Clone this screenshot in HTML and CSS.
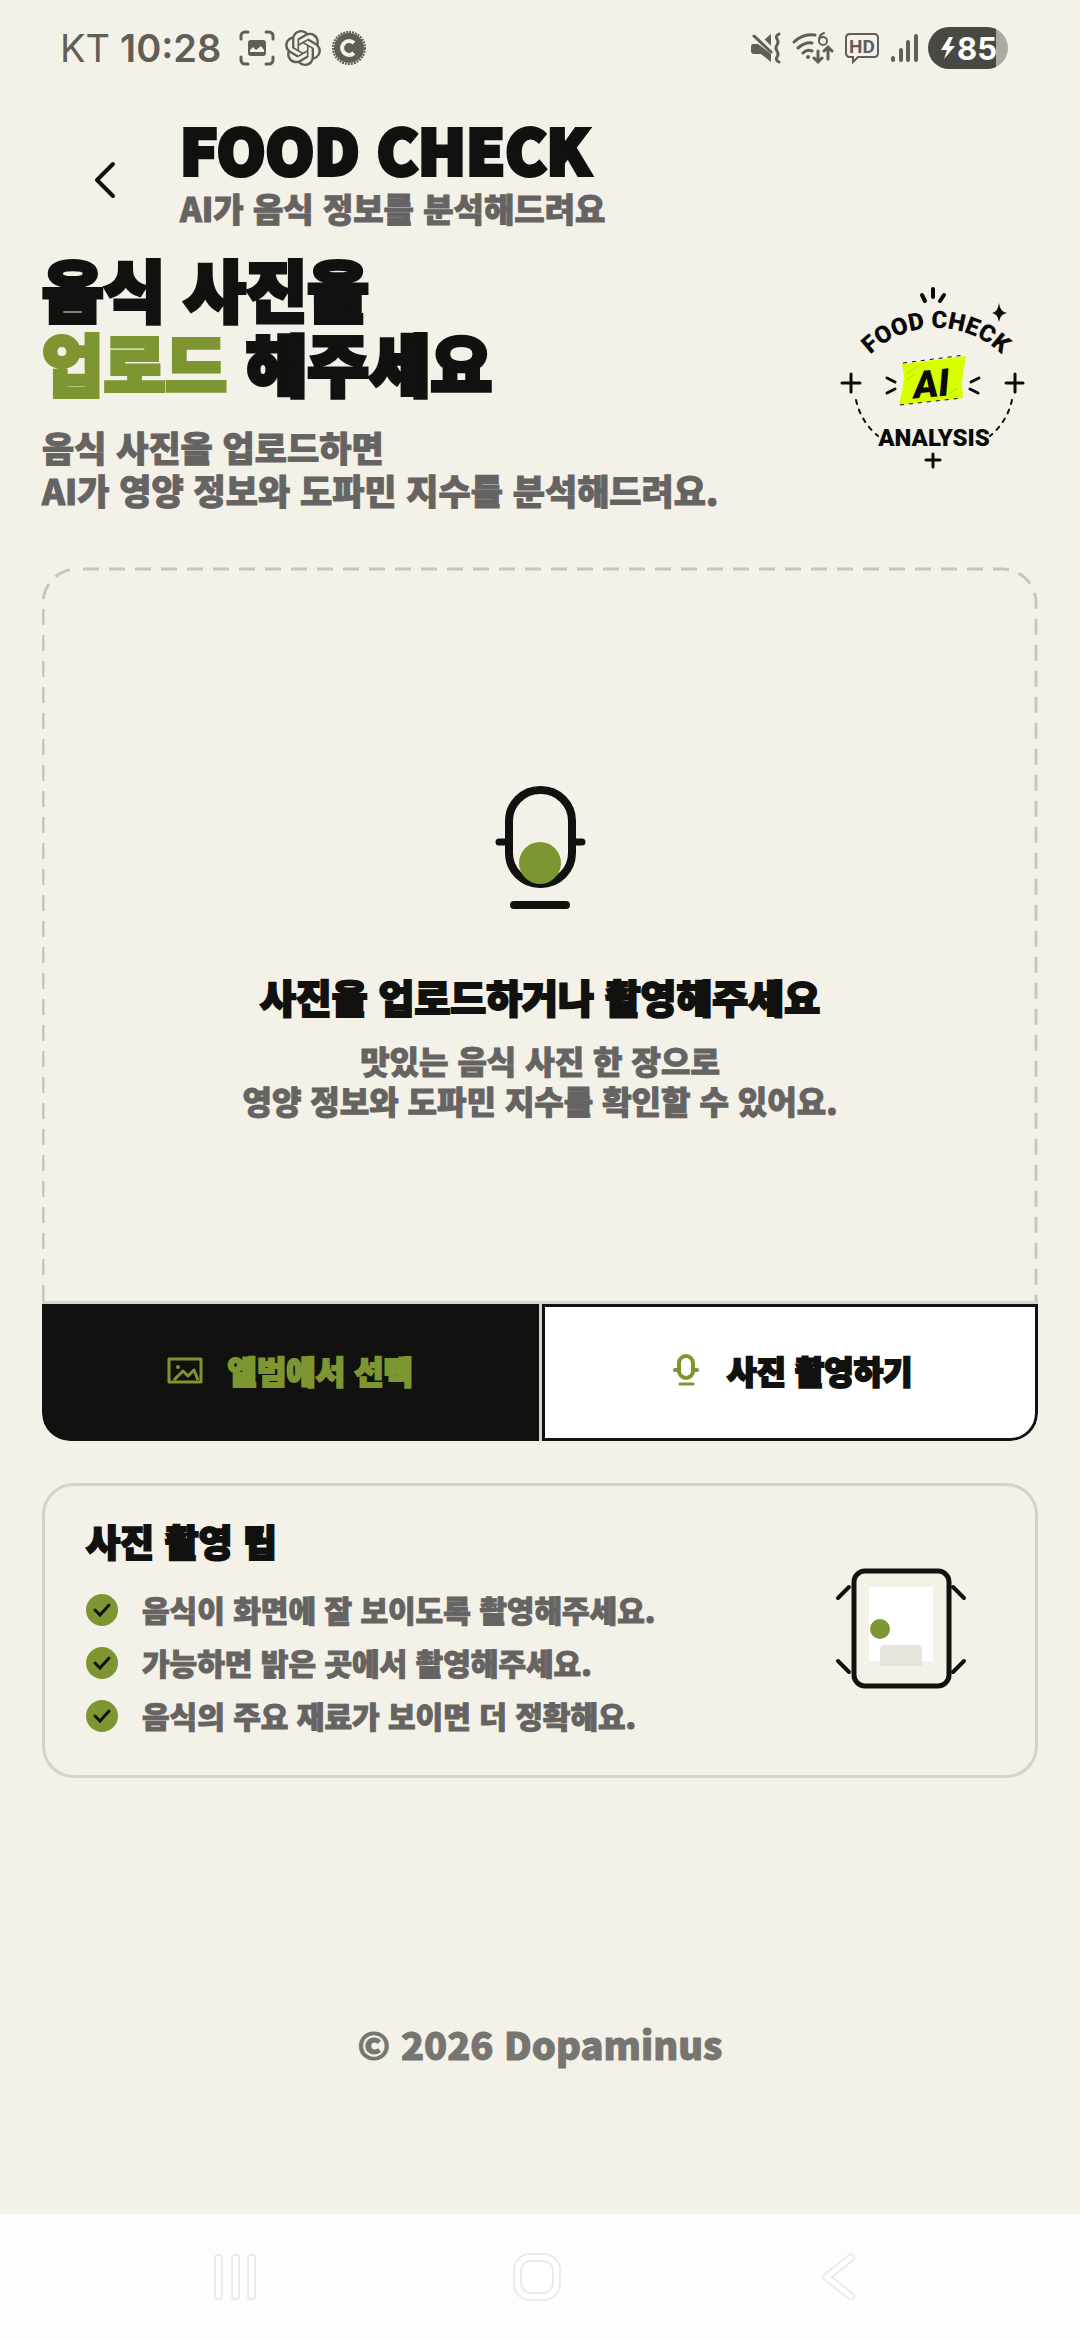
FILE: index.html
```
<!DOCTYPE html>
<html lang="ko">
<head>
    <meta charset="UTF-8">
    <meta name="viewport" content="width=device-width, initial-scale=1.0">
    <title>FOOD CHECK</title>
    <link rel="stylesheet" href="styles.css">
</head>
<body>

<!-- Status bar -->
<div class="status-bar">
    <div class="status-left">
        <span class="carrier">KT</span>
        <span class="time">10:28</span>
        <svg class="scan" width="36" height="36" viewBox="0 0 36 36" fill="none" stroke="currentColor" stroke-width="3" stroke-linecap="round">
            <path d="M2 9V6a4 4 0 0 1 4-4h3M27 2h3a4 4 0 0 1 4 4v3M34 27v3a4 4 0 0 1-4 4h-3M9 34H6a4 4 0 0 1-4-4v-3"/>
            <rect x="9" y="10" width="18" height="16" rx="3" fill="currentColor" stroke="none"/>
            <path d="M11 22v-2l3-3 3 3 5-4 3 4v2z" fill="#f4f1e8" stroke="none"/>
        </svg>
        <svg width="36" height="36" viewBox="0 0 24 24" fill="currentColor">
            <path d="M22.2819 9.8211a5.9847 5.9847 0 0 0-.5157-4.9108 6.0462 6.0462 0 0 0-6.5098-2.9A6.0651 6.0651 0 0 0 4.9807 4.1818a5.9847 5.9847 0 0 0-3.9977 2.9 6.0462 6.0462 0 0 0 .7427 7.0966 5.98 5.98 0 0 0 .511 4.9107 6.051 6.051 0 0 0 6.5146 2.9001A5.9847 5.9847 0 0 0 13.2599 24a6.0557 6.0557 0 0 0 5.7718-4.2058 5.9894 5.9894 0 0 0 3.9977-2.9001 6.0557 6.0557 0 0 0-.7475-7.0729zm-9.022 12.6081a4.4755 4.4755 0 0 1-2.8764-1.0408l.1419-.0804 4.7783-2.7582a.7948.7948 0 0 0 .3927-.6813v-6.7369l2.02 1.1686a.071.071 0 0 1 .038.0615v5.5826a4.504 4.504 0 0 1-4.4945 4.4944zm-9.6607-4.1254a4.4708 4.4708 0 0 1-.5346-3.0137l.142.0852 4.783 2.7582a.7712.7712 0 0 0 .7806 0l5.8428-3.3685v2.3324a.0804.0804 0 0 1-.0332.0615L9.74 19.9502a4.4992 4.4992 0 0 1-6.1408-1.6464zM2.3408 7.8956a4.485 4.485 0 0 1 2.3655-1.9728V11.6a.7664.7664 0 0 0 .3879.6765l5.8144 3.3543-2.0201 1.1685a.0757.0757 0 0 1-.071 0l-4.8303-2.7865A4.504 4.504 0 0 1 2.3408 7.872zm16.5963 3.8558L13.1038 8.364 15.1192 7.2a.0757.0757 0 0 1 .071 0l4.8303 2.7913a4.4944 4.4944 0 0 1-.6765 8.1042v-5.6772a.79.79 0 0 0-.407-.667zm2.0107-3.0231l-.142-.0852-4.7735-2.7818a.7759.7759 0 0 0-.7854 0L9.409 9.2297V6.8974a.0662.0662 0 0 1 .0284-.0615l4.8303-2.7866a4.4992 4.4992 0 0 1 6.6802 4.66zM8.3065 12.863l-2.02-1.1638a.0804.0804 0 0 1-.038-.0567V6.0742a4.4992 4.4992 0 0 1 7.3757-3.4537l-.142.0805L8.704 5.459a.7948.7948 0 0 0-.3927.6813zm1.0976-2.3654l2.602-1.4998 2.6069 1.4998v2.9994l-2.5974 1.4997-2.6067-1.4997Z"/>
        </svg>
        <svg width="36" height="36" viewBox="0 0 36 36">
            <circle cx="18" cy="18" r="15" fill="currentColor"/>
            <circle cx="18" cy="18" r="16" fill="none" stroke="currentColor" stroke-width="2" stroke-dasharray="2 1"/>
            <path d="M23 13a7 7 0 1 0 0 10" fill="none" stroke="#f4f1e8" stroke-width="4"/>
        </svg>
    </div>
    <div class="status-right">
        <svg width="32" height="32" viewBox="0 0 32 32" fill="currentColor">
            <path d="M3 12h5l13 10v8L11 22H4q-3 0-3-3v-4q0-3 2-3zM14 8l7-6v13z"/>
            <path d="M5 2l17 17" stroke="#f4f1e8" stroke-width="6"/>
            <path d="M4 4l17 16" stroke="currentColor" stroke-width="3" stroke-linecap="round"/>
            <path d="M29 2q-4 2-2 5t0 6 0 6 0 6 2 5" fill="none" stroke="currentColor" stroke-width="3" stroke-linecap="round"/>
        </svg>
        <svg width="42" height="36" viewBox="0 0 42 36" fill="none" stroke="currentColor" stroke-width="3" stroke-linecap="round">
            <path d="M2 12q9-9 21-7M6 18q7-6 14-5M11 23q4-4 9-2"/>
            <circle cx="16" cy="27" r="2" fill="currentColor" stroke="none"/>
            <path d="M26 21v10M22 28l4 4 4-4M36 29V18M32 21l4-4 4 4"/>
            <path d="M32 3q-5 2-5 7" stroke-width="2"/>
            <circle cx="31" cy="11" r="4" stroke-width="2"/>
        </svg>
        <svg width="36" height="32" viewBox="0 0 36 32">
            <path d="M6 2h24q4 0 4 4v15q0 4-4 4H14l-5 5v-5H6q-4 0-4-4V6q0-4 4-4z" fill="none" stroke="currentColor" stroke-width="2"/>
            <text x="18" y="21" text-anchor="middle" class="hd-text">HD</text>
        </svg>
        <svg width="28" height="30" viewBox="0 0 28 30" stroke="currentColor" stroke-width="4" stroke-linecap="round">
            <path d="M3 25v2M11 17v10M18 9v18M26 3v24"/>
        </svg>
        <div class="battery">
            <svg width="18" height="24" viewBox="0 0 18 24" fill="currentColor"><path d="M10 1L2 14h6L5 23l11-13h-6l4-9z"/></svg>
            <span>85</span>
        </div>
    </div>
</div>

<div class="container">
    <!-- Header -->
    <header class="app-header">
        <button class="back-btn" aria-label="뒤로">
            <svg width="24" height="40" viewBox="0 0 24 40" fill="none" stroke="currentColor" stroke-width="4" stroke-linecap="round" stroke-linejoin="round"><path d="M20 4L4 20l16 16"/></svg>
        </button>
        <div>
            <h1>FOOD CHECK</h1>
            <p class="subtitle">AI가 음식 정보를 분석해드려요</p>
        </div>
    </header>

    <!-- Intro -->
    <section class="hero">
        <div>
            <h2>음식 사진을<br><span class="green">업로드</span> 해주세요</h2>
            <p class="hero-text">음식 사진을 업로드하면<br>AI가 영양 정보와 도파민 지수를 분석해드려요.</p>
        </div>
        <svg class="badge" width="220" height="220" viewBox="0 0 220 220">
            <path id="badge-arc" d="M30 114A94 94 0 0 1 202 114" fill="none"/>
            <text class="badge-arc-text"><textPath href="#badge-arc" startOffset="50%" text-anchor="middle">FOOD CHECK</textPath></text>
            <g stroke="#0a0a0a" stroke-width="4" stroke-linecap="round" fill="none">
                <path d="M113 19v8M102 25l3 6M124 25l-4 6"/>
                <path d="M22 113h18M31 104v18M186 113h17M195 104v18M106 190h14M113 184v13" stroke-width="3"/>
                <path d="M67 108l8 4M67 123l8-4M159 108l-8 4M158 123l-8-4" stroke-width="3"/>
                <path d="M36 130q5 22 22 36M192 130q-5 22-22 36" stroke-width="2" stroke-dasharray="4 6"/>
            </g>
            <path d="M179 33q1 9 8 10-7 1-8 9-1-8-7-9 6-1 7-10z" fill="#0a0a0a"/>
            <path d="M82 94l64-8-2 12-2 14 1 16-64 7 3-14 2-14z" fill="#d8ff00"/>
            <path d="M83 93l62-8M80 135l62-7" stroke="#0a0a0a" stroke-width="1" stroke-dasharray="4 5"/>
            <path d="M86 104l12-8M86 110l8-5M128 124l10-6" stroke="#b6e000" stroke-width="1"/>
            <text x="111" y="127" text-anchor="middle" class="badge-ai" transform="rotate(-5 111 113)">AI</text>
            <text x="114" y="176" text-anchor="middle" class="badge-bottom-text">ANALYSIS</text>
        </svg>
    </section>

    <!-- Upload box -->
    <section class="upload">
        <svg class="dashes" aria-hidden="true"><rect x="1" y="2" rx="34"/></svg>
        <div class="upload-body">
            <svg width="100" height="192" viewBox="0 0 100 192">
                <path d="M9 86h10M82 86h10" stroke="#111110" stroke-width="7" stroke-linecap="round"/>
                <rect x="19" y="34" width="63" height="94" rx="31" fill="none" stroke="#111110" stroke-width="8"/>
                <circle cx="50" cy="107" r="21" fill="#7e9632"/>
                <path d="M24 149h52" stroke="#111110" stroke-width="8" stroke-linecap="round"/>
            </svg>
            <h3>사진을 업로드하거나 촬영해주세요</h3>
            <p>맛있는 음식 사진 한 장으로<br>영양 정보와 도파민 지수를 확인할 수 있어요.</p>
        </div>
        <div class="upload-actions">
            <button class="action album">
                <svg width="36" height="28" viewBox="0 0 36 28" fill="none" stroke="currentColor" stroke-width="3" stroke-linejoin="round">
                    <rect x="2" y="3" width="32" height="23"/>
                    <path d="M7 24l9-9 5 5 6-6 4 10" stroke-width="3"/>
                    <circle cx="11" cy="11" r="2" fill="currentColor" stroke="none"/>
                </svg>
                앨범에서 선택
            </button>
            <button class="action camera">
                <svg width="36" height="34" viewBox="0 0 36 34" fill="none" stroke="#7e9632" stroke-width="4" stroke-linecap="round">
                    <rect x="12" y="3" width="14" height="22" rx="7"/>
                    <path d="M8 17h2M28 17h2"/>
                    <path d="M13 31h13" stroke-width="3"/>
                </svg>
                사진 촬영하기
            </button>
        </div>
    </section>

    <!-- Tips -->
    <section class="tips">
        <div>
            <h3>사진 촬영 팁</h3>
            <ul>
                <li><svg width="32" height="32" viewBox="0 0 32 32"><circle cx="16" cy="16" r="16" fill="#7e9632"/><path d="M9 16l5 5 9-10" fill="none" stroke="#111110" stroke-width="3" stroke-linecap="round"/></svg>음식이 화면에 잘 보이도록 촬영해주세요.</li>
                <li><svg width="32" height="32" viewBox="0 0 32 32"><circle cx="16" cy="16" r="16" fill="#7e9632"/><path d="M9 16l5 5 9-10" fill="none" stroke="#111110" stroke-width="3" stroke-linecap="round"/></svg>가능하면 밝은 곳에서 촬영해주세요.</li>
                <li><svg width="32" height="32" viewBox="0 0 32 32"><circle cx="16" cy="16" r="16" fill="#7e9632"/><path d="M9 16l5 5 9-10" fill="none" stroke="#111110" stroke-width="3" stroke-linecap="round"/></svg>음식의 주요 재료가 보이면 더 정확해요.</li>
            </ul>
        </div>
        <svg width="132" height="124" viewBox="0 0 132 124">
            <rect x="34" y="22" width="64" height="74" fill="#fff"/>
            <circle cx="45" cy="64" r="10" fill="#7e9632"/>
            <path d="M45 101V84q0-4 4-4h34q4 0 4 4v17z" fill="#e8e4dc"/>
            <rect x="19" y="6" width="95" height="115" rx="11" fill="none" stroke="#111110" stroke-width="5"/>
            <path d="M14 22L3 33M118 22l11 11M3 96l11 11M129 96l-11 11" stroke="#111110" stroke-width="4" stroke-linecap="round"/>
        </svg>
    </section>

    <footer>© 2026 Dopaminus</footer>
</div>

<!-- Navigation bar -->
<nav class="nav-bar">
    <button aria-label="최근 앱">
        <svg width="48" height="50" viewBox="0 0 48 50"><rect x="4" y="3" width="7" height="44" rx="3"/><rect x="21" y="3" width="7" height="44" rx="3"/><rect x="37" y="3" width="7" height="44" rx="3"/></svg>
    </button>
    <button aria-label="홈">
        <svg width="50" height="50" viewBox="0 0 50 50"><rect x="2" y="2" width="46" height="46" rx="16"/><rect x="9" y="9" width="32" height="32" rx="10"/></svg>
    </button>
    <button aria-label="뒤로 가기">
        <svg width="36" height="50" viewBox="0 0 36 50"><path d="M28 3L3 23q-2 2 0 4l25 20q3 2 5-1 1-2-1-4L11 25 32 8q2-2 1-4-2-3-5-1z"/></svg>
    </button>
</nav>

</body>
</html>
```

FILE: styles.css
```
* {
    box-sizing: border-box;
}
body {
    font-family: 'Noto Sans CJK KR', sans-serif;
    font-weight: 900;
    margin: 0;
    min-height: 100vh;
    display: flex;
    flex-direction: column;
    background-color: #f4f1e8;
    color: #111110;
}
h1, h2, h3, p, ul {
    margin: 0;
    padding: 0;
    font-weight: 900;
}
svg {
    display: block;
    flex-shrink: 0;
}
button {
    border: none;
    background: none;
    padding: 0;
    color: inherit;
    font: inherit;
    cursor: pointer;
}

/* status bar */
.status-bar {
    height: 96px;
    padding: 0 72px 0 60px;
    display: flex;
    align-items: center;
    justify-content: space-between;
    font-family: Inter, sans-serif;
    font-size: 38px;
    color: #605e57;
}
.status-left, .status-right {
    display: flex;
    align-items: center;
    gap: 10px;
}
.carrier {
    font-weight: 400;
}
.time {
    font-weight: 600;
}
.scan {
    margin-left: 8px;
}
.hd-text {
    font: 700 19px Roboto, sans-serif;
    fill: currentColor;
}
.battery {
    width: 80px;
    height: 42px;
    border-radius: 21px;
    display: flex;
    align-items: center;
    justify-content: center;
    background: linear-gradient(to right, #4a4843 85%, #aaa9a2 85%);
    color: #fff;
    font-size: 31px;
    font-weight: 700;
}

.container {
    flex: 1;
    display: flex;
    flex-direction: column;
    padding: 20px 42px 0;
}
.app-header {
    display: flex;
    align-items: center;
}
.back-btn {
    width: 138px;
    display: flex;
    justify-content: center;
    padding: 16px 12px 0 0;
}
h1 {
    font-size: 62px;
    line-height: 64px;
    -webkit-text-stroke: 4px currentColor;
}
.subtitle {
    margin-top: 8px;
    font-size: 33px;
    line-height: 40px;
    color: #666462;
    -webkit-text-stroke: 1px currentColor;
}

.hero {
    display: flex;
    justify-content: space-between;
    margin-top: 23px;
}
.hero h2 {
    font-size: 67px;
    line-height: 74px;
    -webkit-text-stroke: 4px currentColor;
}
.green {
    color: #7e9632;
}
.hero-text {
    margin-top: 26px;
    font-size: 35px;
    line-height: 43px;
    color: #666462;
    -webkit-text-stroke: 1px currentColor;
}
.badge {
    margin: 19px -2px 0 -100px;
}
.badge-arc-text, .badge-bottom-text {
    font: 900 24px Roboto, sans-serif;
    fill: #0a0a0a;
}
.badge-ai {
    font: italic 900 38px Roboto, sans-serif;
    fill: #0a0a0a;
}

.upload {
    position: relative;
    margin-top: 56px;
}
.dashes {
    position: absolute;
    top: 0;
    left: 0;
    width: 100%;
    height: 100%;
}
.dashes rect {
    width: calc(100% - 3px);
    height: calc(100% - 3px);
    fill: none;
    stroke: #c9c6be;
    stroke-width: 3px;
    stroke-dasharray: 16 10;
    stroke-dashoffset: -6px;
}
.upload-body {
    position: relative;
    display: flex;
    flex-direction: column;
    align-items: center;
    padding: 189px 0 181px;
    text-align: center;
}
.upload-body h3 {
    margin-top: 24px;
    font-size: 39px;
    line-height: 48px;
    -webkit-text-stroke: 2px currentColor;
}
.upload-body p {
    margin-top: 20px;
    font-size: 32px;
    line-height: 40px;
    color: #666462;
    -webkit-text-stroke: 1px currentColor;
}
.upload-actions {
    position: relative;
    display: grid;
    grid-template-columns: 1fr 1fr;
    gap: 3px;
    border-top: 3px solid #d6d6cb;
    border-radius: 0 0 28px 28px;
    background: #d6d6cb;
    overflow: hidden;
}
.action {
    height: 137px;
    display: flex;
    align-items: center;
    justify-content: center;
    gap: 24px;
    padding-bottom: 6px;
    border: 3px solid #111110;
    font-size: 32px;
    -webkit-text-stroke: 2px currentColor;
}
.album {
    background: #111110;
    color: #7e9632;
    border-bottom-left-radius: 28px;
}
.camera {
    background: #fff;
    border-bottom-right-radius: 28px;
}

.tips {
    display: flex;
    align-items: center;
    justify-content: space-between;
    margin-top: 42px;
    padding: 33px 68px 41px 41px;
    border: 3px solid #d6d3cb;
    border-radius: 32px;
}
.tips h3 {
    font-size: 37px;
    line-height: 44px;
    -webkit-text-stroke: 2px currentColor;
}
.tips ul {
    list-style: none;
    margin-top: 28px;
    display: grid;
    gap: 16px;
}
.tips li {
    display: flex;
    align-items: center;
    gap: 24px;
    font-size: 30px;
    line-height: 37px;
    color: #666462;
    -webkit-text-stroke: 1px currentColor;
}

footer {
    margin-top: auto;
    padding: 48px 0 146px;
    text-align: center;
    font-size: 38px;
    line-height: 48px;
    color: #777572;
    -webkit-text-stroke: 1px currentColor;
}

.nav-bar {
    height: 126px;
    padding: 0 90px 0 84px;
    display: flex;
    background: #fdfdfb;
}
.nav-bar button {
    flex: 1;
    display: flex;
    align-items: center;
    justify-content: center;
}
.nav-bar svg {
    fill: #fff;
    stroke: #ebebe9;
    stroke-width: 2px;
}
```
